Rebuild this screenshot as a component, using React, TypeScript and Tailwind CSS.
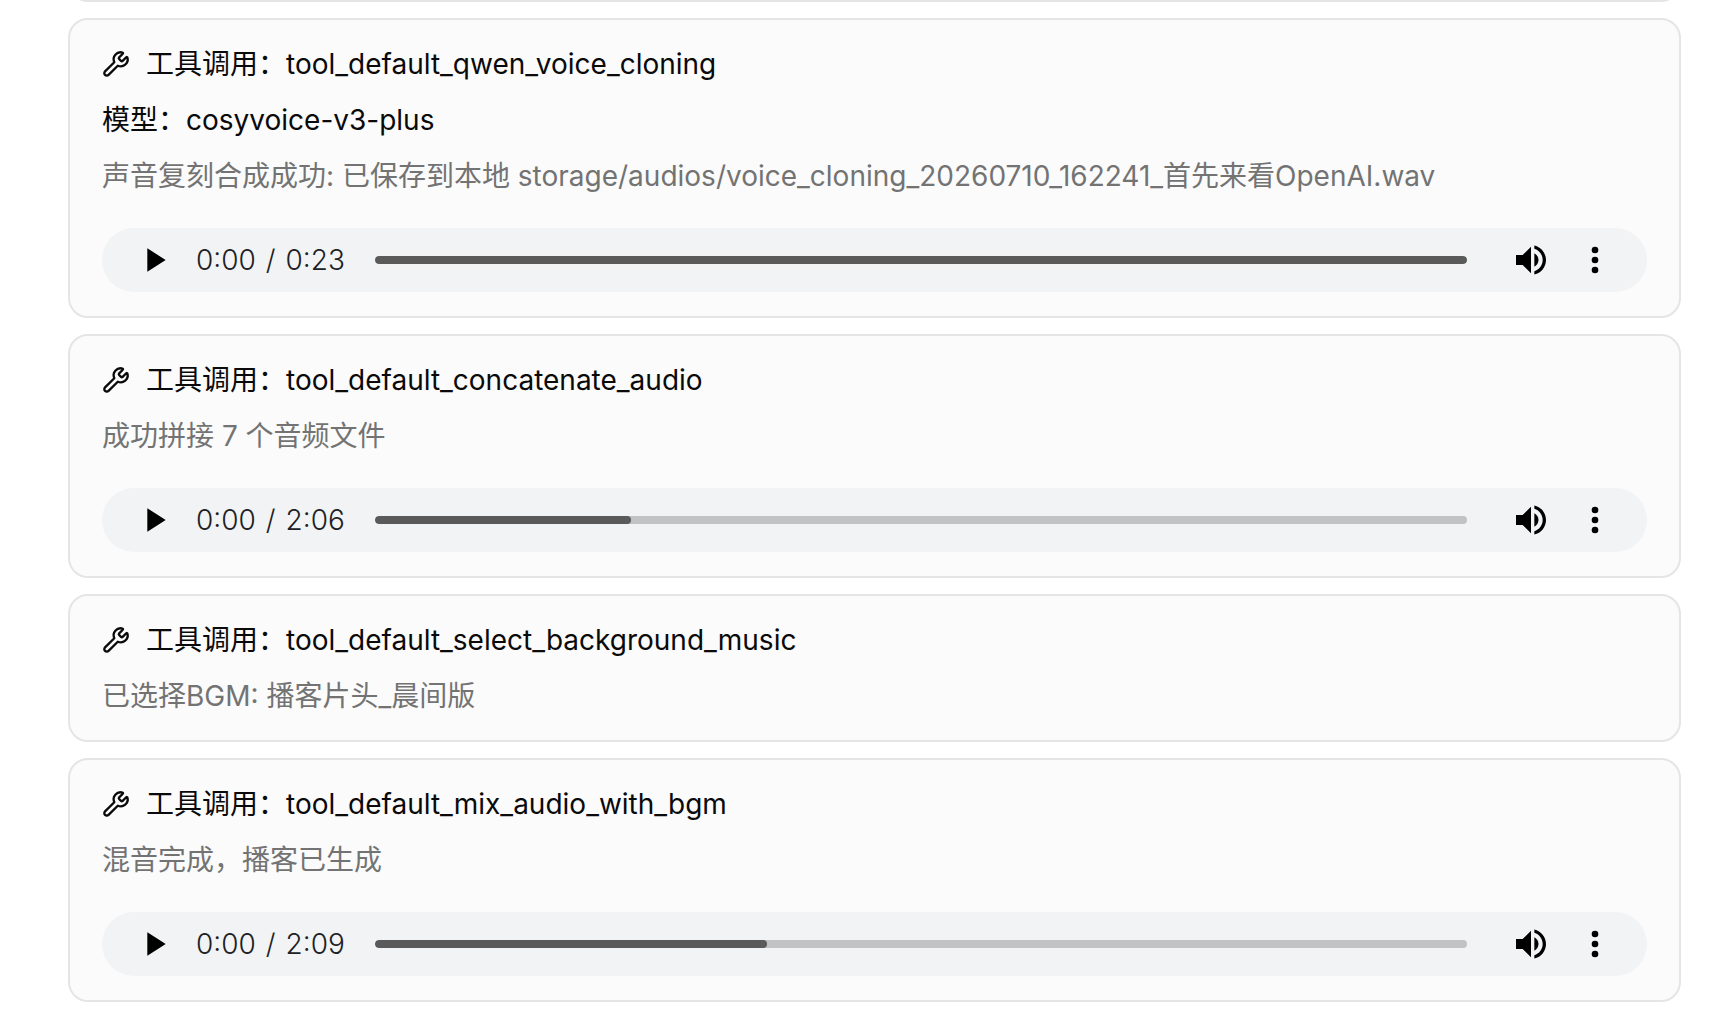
import { useState } from "react"
import { Wrench } from "lucide-react"

interface Audio {
  duration: string
  seconds: number
  buffered: number
}

interface ToolCall {
  name: string
  model?: string
  message: string
  audio?: Audio
}

const toolCalls: ToolCall[] = [
  {
    name: "tool_default_qwen_voice_cloning",
    model: "cosyvoice-v3-plus",
    message: "声音复刻合成成功: 已保存到本地 storage/audios/voice_cloning_20260710_162241_首先来看OpenAI.wav",
    audio: { duration: "0:23", seconds: 23, buffered: 100 },
  },
  {
    name: "tool_default_concatenate_audio",
    message: "成功拼接 7 个音频文件",
    audio: { duration: "2:06", seconds: 126, buffered: 23.4 },
  },
  {
    name: "tool_default_select_background_music",
    message: "已选择BGM: 播客片头_晨间版",
  },
  {
    name: "tool_default_mix_audio_with_bgm",
    message: "混音完成，播客已生成",
    audio: { duration: "2:09", seconds: 129, buffered: 35.9 },
  },
]

function formatTime(value: number) {
  return `${Math.floor(value / 60)}:${String(value % 60).padStart(2, "0")}`
}

function AudioPlayer({ audio, label }: { audio: Audio; label: string }) {
  const [position, setPosition] = useState(0)

  return (
    <div className="mt-4 flex h-16 items-center rounded-full bg-[#f1f3f4] px-8 text-black">
      <button type="button" aria-label="播放" className="shrink-0">
        <svg viewBox="0 0 24 24" className="size-10" fill="currentColor">
          <path d="M8 5v14l11-7z" />
        </svg>
      </button>
      <div className="ml-[22px] flex w-[156px] shrink-0 gap-2.5 whitespace-nowrap font-light text-[#202124]">
        <span>{formatTime(position)}</span>
        <span>/</span>
        <span>{audio.duration}</span>
      </div>

      {/* Seek bar, the dark part is what has been buffered */}
      <div className="relative ml-[23px] h-2 min-w-0 flex-1 overflow-hidden rounded-full bg-[#c1c2c3]">
        <div className="h-full rounded-full bg-[#5a5a5a]" style={{ width: `${audio.buffered}%` }} />
        <input
          type="range"
          aria-label={`${label} 播放进度`}
          min={0}
          max={audio.seconds}
          value={position}
          onChange={(e) => setPosition(Number(e.target.value))}
          className="absolute inset-0 w-full cursor-pointer opacity-0"
        />
      </div>

      <button type="button" aria-label="静音" className="ml-11 shrink-0">
        <svg viewBox="0 0 24 24" className="size-10" fill="currentColor">
          <path d="M3 9v6h4l5 5V4L7 9H3zm13.5 3c0-1.77-1.02-3.29-2.5-4.03v8.05c1.48-.73 2.5-2.25 2.5-4.02zM14 3.23v2.06c2.89.86 5 3.54 5 6.71s-2.11 5.85-5 6.71v2.06c4.01-.91 7-4.49 7-8.77s-2.99-7.86-7-8.77z" />
        </svg>
      </button>
      <button type="button" aria-label="更多选项" className="ml-6 shrink-0">
        <svg viewBox="0 0 24 24" className="size-10" fill="currentColor">
          <circle cx="12" cy="6" r="2" />
          <circle cx="12" cy="12" r="2" />
          <circle cx="12" cy="18" r="2" />
        </svg>
      </button>
    </div>
  )
}

function ToolCallCard({ call }: { call: ToolCall }) {
  return (
    <section className="flex flex-col gap-4 rounded-[20px] border-2 border-[#e5e5e5] bg-[#fbfbfb] px-8 py-6">
      <div className="flex items-center gap-4">
        <Wrench className="size-7 shrink-0" />
        <h2>工具调用：{call.name}</h2>
      </div>
      {call.model && <p>模型：{call.model}</p>}
      <p className="text-[#737373]">{call.message}</p>
      {call.audio && <AudioPlayer audio={call.audio} label={call.name} />}
    </section>
  )
}

export default function App() {
  return (
    <main className="flex min-h-screen flex-col gap-4 overflow-hidden bg-white pr-[39px] pl-[68px] font-['Inter','Noto_Sans_CJK_SC',sans-serif] text-[28px] leading-10 text-[#0a0a0a]">
      {/* Tail of the previous card, scrolled out of view */}
      <div className="-mt-[18px] h-5 shrink-0 rounded-b-[20px] border-2 border-t-0 border-[#e5e5e5] bg-[#fbfbfb]" />
      {toolCalls.map((call) => (
        <ToolCallCard key={call.name} call={call} />
      ))}
    </main>
  )
}
